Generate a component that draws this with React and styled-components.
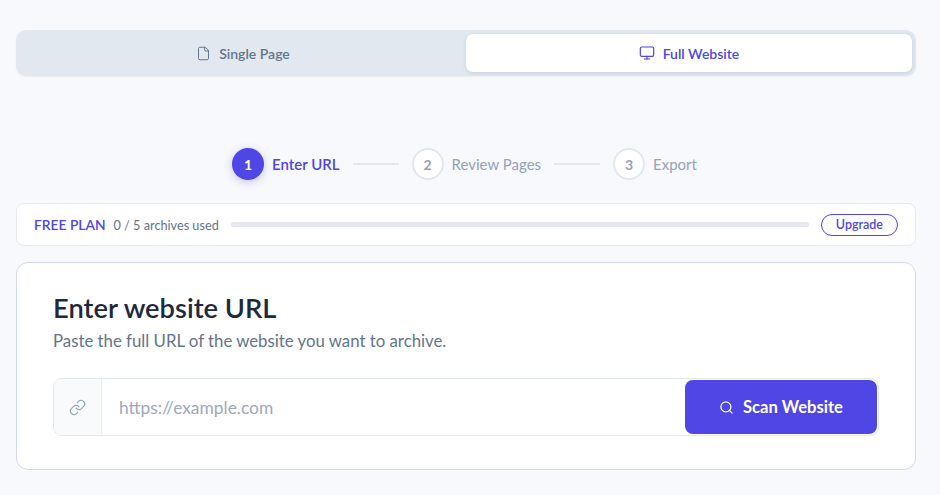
import React, { useState } from "react";
import styled, { createGlobalStyle } from "styled-components";
import { File, Monitor, Link, Search } from "lucide-react";

const GlobalStyle = createGlobalStyle`
  html, body {
    margin: 0;
    padding: 0;
    background: #f8f9fc;
    font-family: Lato, "Noto Sans", sans-serif;
  }
  * { box-sizing: border-box; }
`;

const Page = styled.div`
  width: 900px;
  margin-left: 16px;
  padding-top: 30px;
  display: flex;
  flex-direction: column;
`;

const ModeToggle = styled.div`
  display: flex;
  background: #e2e8f0;
  border-radius: 10px;
  padding: 4px;
  height: 46px;
  box-shadow: 0 1px 2px rgba(15, 23, 42, 0.05);
`;

const ModeTab = styled.button`
  flex: 1;
  display: flex;
  align-items: center;
  justify-content: center;
  gap: 8px;
  border: none;
  border-radius: 7px;
  font-family: inherit;
  font-size: 14px;
  font-weight: 600;
  cursor: pointer;
  color: ${(p) => (p.$active ? "#4f46e5" : "#64748b")};
  background: ${(p) => (p.$active ? "#ffffff" : "transparent")};
  box-shadow: ${(p) => (p.$active ? "0 1px 4px rgba(15, 23, 42, 0.12)" : "none")};
`;

const Steps = styled.div`
  display: flex;
  align-items: center;
  justify-content: center;
  gap: 13px;
  margin-top: 72px;
  margin-left: -3px;
`;

const Step = styled.div`
  display: flex;
  align-items: center;
  gap: 8px;
  font-size: 15px;
  font-weight: ${(p) => (p.$active ? 600 : 400)};
  color: ${(p) => (p.$active ? "#4f46e5" : "#94a3b8")};
`;

const StepDot = styled.div`
  width: 32px;
  height: 32px;
  border-radius: 50%;
  display: flex;
  align-items: center;
  justify-content: center;
  font-size: 14px;
  font-weight: 700;
  background: ${(p) => (p.$active ? "#4f46e5" : "#ffffff")};
  color: ${(p) => (p.$active ? "#ffffff" : "#94a3b8")};
  border: ${(p) => (p.$active ? "none" : "2px solid #e2e8f0")};
  box-shadow: ${(p) => (p.$active ? "0 2px 8px rgba(79, 70, 229, 0.3)" : "none")};
`;

const StepLine = styled.div`
  width: 46px;
  height: 2px;
  background: #e2e8f0;
`;

const PlanBar = styled.div`
  margin-top: 23px;
  height: 43px;
  background: #ffffff;
  border: 1px solid #e6e9f0;
  border-radius: 8px;
  display: flex;
  align-items: center;
  padding: 0 17px;
  gap: 12px;
`;

const PlanLabel = styled.span`
  font-size: 13.8px;
  font-weight: 600;
  color: #4f46e5;
`;

const PlanUsage = styled.span`
  font-size: 12.7px;
  color: #64748b;
  margin-left: -4px;
`;

const UsageTrack = styled.div`
  flex: 1;
  height: 5px;
  border-radius: 3px;
  background: #e4e6f0;
`;

const UpgradeButton = styled.button`
  height: 22px;
  padding: 0 14px;
  border-radius: 999px;
  border: 1px solid #4f46e5;
  background: #ffffff;
  color: #4f46e5;
  font-family: inherit;
  font-size: 12.5px;
  font-weight: 600;
`;

const Card = styled.div`
  margin-top: 16px;
  background: #ffffff;
  border: 1px solid #d6d6f6;
  border-radius: 12px;
  padding: 27px 36px 33px;
`;

const Title = styled.h2`
  margin: 0;
  font-size: 27.3px;
  font-weight: 600;
  color: #1e293b;
  line-height: 36px;
`;

const Subtitle = styled.p`
  margin: 4px 0 0;
  font-size: 16.8px;
  line-height: 22px;
  color: #64748b;
`;

const InputGroup = styled.div`
  margin-top: 26px;
  display: flex;
  height: 58px;
  border: 1px solid #e2e8f0;
  border-radius: 9px;
  overflow: hidden;
`;

const IconCell = styled.div`
  width: 48px;
  display: flex;
  align-items: center;
  justify-content: center;
  background: #f8fafc;
  border-right: 1px solid #e8ecf2;
  color: #94a3b8;
`;

const UrlInput = styled.input`
  flex: 1;
  border: none;
  outline: none;
  padding: 0 17px;
  font-family: inherit;
  font-size: 17.4px;
  color: #1e293b;
  &::placeholder {
    color: #a0a8bb;
  }
`;

const ScanButton = styled.button`
  width: 192px;
  margin: 1px;
  border: none;
  border-radius: 8px;
  background: #4f46e5;
  color: #ffffff;
  display: flex;
  align-items: center;
  justify-content: center;
  gap: 9px;
  font-family: inherit;
  font-size: 16.6px;
  font-weight: 700;
  cursor: pointer;
`;

export default function App() {
  const [mode, setMode] = useState("full");
  const [url, setUrl] = useState("");

  return (
    <>
      <GlobalStyle />
      <Page>
        <ModeToggle>
          <ModeTab $active={mode === "single"} onClick={() => setMode("single")}>
            <File size={15} strokeWidth={1.6} />
            Single Page
          </ModeTab>
          <ModeTab $active={mode === "full"} onClick={() => setMode("full")}>
            <Monitor size={16} strokeWidth={1.8} />
            Full Website
          </ModeTab>
        </ModeToggle>

        <Steps>
          <Step $active>
            <StepDot $active>1</StepDot>
            Enter URL
          </Step>
          <StepLine />
          <Step>
            <StepDot>2</StepDot>
            Review Pages
          </Step>
          <StepLine />
          <Step>
            <StepDot>3</StepDot>
            Export
          </Step>
        </Steps>

        <PlanBar>
          <PlanLabel>FREE PLAN</PlanLabel>
          <PlanUsage>0 / 5 archives used</PlanUsage>
          <UsageTrack />
          <UpgradeButton>Upgrade</UpgradeButton>
        </PlanBar>

        <Card>
          <Title>Enter website URL</Title>
          <Subtitle>Paste the full URL of the website you want to archive.</Subtitle>
          <InputGroup>
            <IconCell>
              <Link size={17} strokeWidth={1.6} />
            </IconCell>
            <UrlInput
              placeholder="https://example.com"
              value={url}
              onChange={(e) => setUrl(e.target.value)}
            />
            <ScanButton>
              <Search size={15} strokeWidth={2} />
              Scan Website
            </ScanButton>
          </InputGroup>
        </Card>
      </Page>
    </>
  );
}
